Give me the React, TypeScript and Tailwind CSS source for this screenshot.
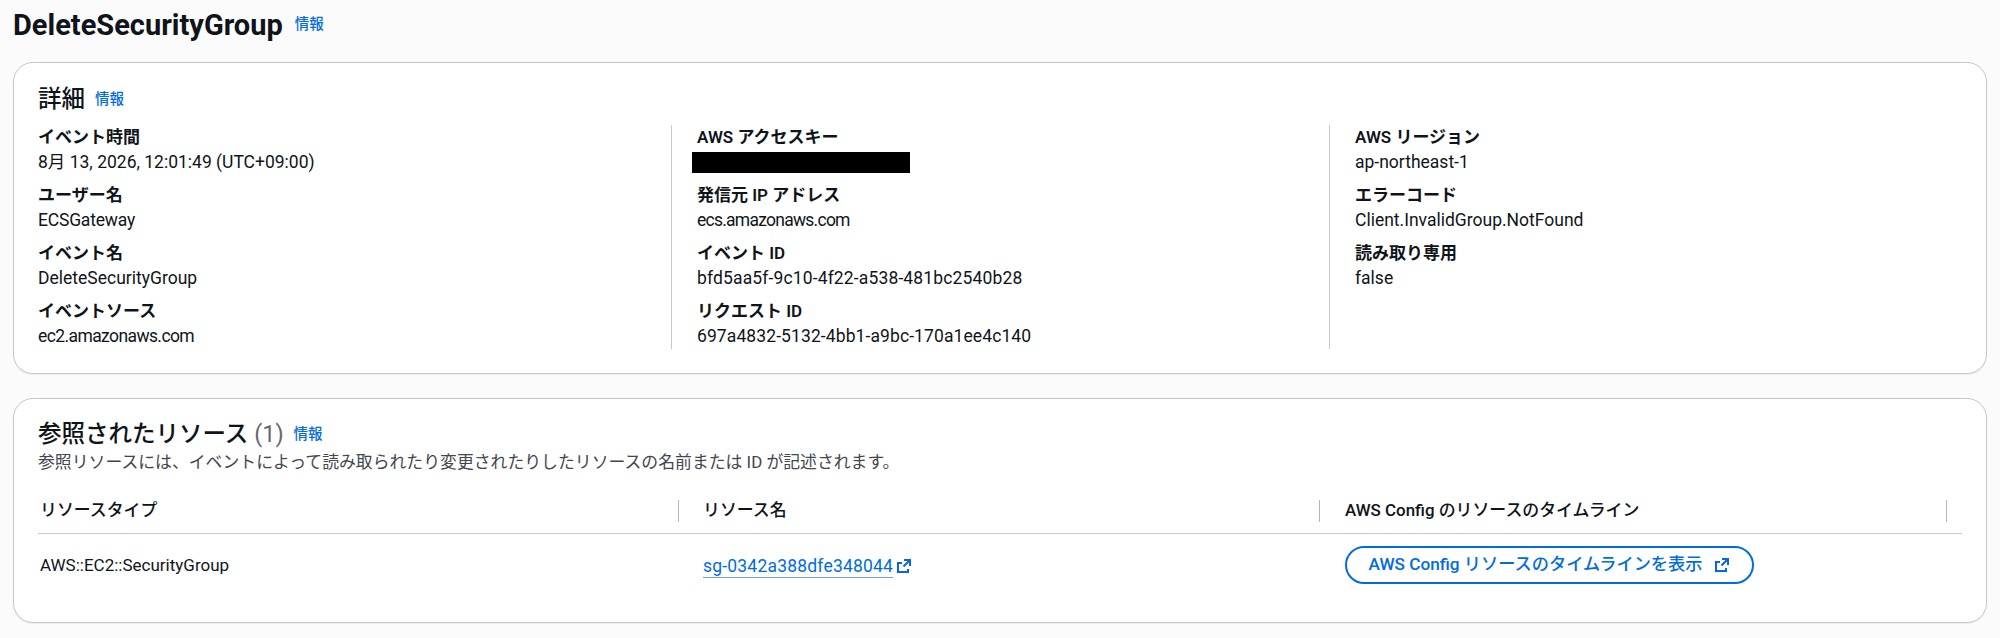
import React from 'react';

const detailColumns = [
  [
    { label: 'イベント時間', value: '8月 13, 2026, 12:01:49 (UTC+09:00)' },
    { label: 'ユーザー名', value: 'ECSGateway', tracking: 'tracking-[-0.2px]' },
    { label: 'イベント名', value: 'DeleteSecurityGroup' },
    { label: 'イベントソース', value: 'ec2.amazonaws.com', tracking: 'tracking-[-0.6px]' },
  ],
  [
    { label: 'AWS アクセスキー', value: '', redacted: true },
    { label: '発信元 IP アドレス', value: 'ecs.amazonaws.com', tracking: 'tracking-[-0.75px]' },
    { label: 'イベント ID', value: 'bfd5aa5f-9c10-4f22-a538-481bc2540b28', tracking: 'tracking-[0.14px]' },
    { label: 'リクエスト ID', value: '697a4832-5132-4bb1-a9bc-170a1ee4c140', tracking: 'tracking-[0.1px]' },
  ],
  [
    { label: 'AWS リージョン', value: 'ap-northeast-1' },
    { label: 'エラーコード', value: 'Client.InvalidGroup.NotFound' },
    { label: '読み取り専用', value: 'false' },
  ],
];

const ExternalIcon = () => (
  <svg viewBox="0 0 16 16" fill="none" stroke="#0a64dc" strokeWidth="2" className="w-[16px] h-[16px] shrink-0">
    <path d="M8 2h6v6M14 2 7.5 8.5" />
    <path d="M6 5H2v9h10v-3" />
  </svg>
);

const Info = () => <a className="text-[14.5px] text-[#006ce0] font-medium leading-none">情報</a>;

const Field = ({ label, value, redacted, tracking }: { label: string; value: string; redacted?: boolean; tracking?: string }) => (
  <div className="mb-2 last:mb-0">
    <div className="text-[17px] leading-[25px] font-semibold text-[#0f141a]">{label}</div>
    {redacted ? (
      <div className="h-[25px] flex items-center -ml-[5px]">
        <div className="w-[218px] h-[21px] bg-black" />
      </div>
    ) : (
      <div className={`text-[17.5px] leading-[25px] text-[#0f141a] ${tracking ?? ''}`}>{value}</div>
    )}
  </div>
);

export default function App() {
  return (
    <div className="min-h-screen bg-[#fbfbfc] px-[13px] font-['Roboto','Noto_Sans_CJK_JP',sans-serif]">
      <div className="h-[62px] pb-3 flex items-center gap-3">
        <h1 className="text-[29px] font-bold text-[#0f141a] leading-none">DeleteSecurityGroup</h1>
        <Info />
      </div>

      <section className="h-[312px] bg-white border border-[#c6c6cd] rounded-[20px] pt-[21px] px-6 shadow-[0_1px_1px_rgba(0,0,0,0.06)] mb-6">
        <div className="h-8 mb-[9px] flex items-center gap-2.5">
          <h2 className="text-[23.5px] font-medium text-[#0f141a] leading-none">詳細</h2>
          <Info />
        </div>
        <div className="grid grid-cols-[633px_658px_1fr]">
          {detailColumns.map((col, i) => (
            <div key={i} className={i > 0 ? 'pl-[25px] border-l border-[#c6c6cd]' : ''}>
              {col.map((f) => (
                <Field key={f.label} {...f} />
              ))}
            </div>
          ))}
        </div>
      </section>

      <section className="h-[225px] bg-white border border-[#c6c6cd] rounded-[20px] pt-[21px] px-6 shadow-[0_1px_1px_rgba(0,0,0,0.06)]">
        <div className="h-[30px] flex items-center gap-2.5">
          <h2 className="text-[23.5px] font-medium text-[#0f141a] leading-none">
            参照されたリソース <span className="font-normal text-[#656871]">(1)</span>
          </h2>
          <Info />
        </div>
        <p className="text-[16.85px] leading-6 text-[#424650]">
          参照リソースには、イベントによって読み取られたり変更されたりしたリソースの名前または ID が記述されます。
        </p>
        <div className="mt-[26px] grid grid-cols-[641px_641px_627px_1fr] border-b border-[#c6c6cd] h-[34px] text-[16.9px] font-medium text-[#0f141a]">
          <div className="pl-0.5 h-[22px] flex items-center justify-between">
            <span>リソースタイプ</span>
            <span className="w-px h-[22px] bg-[#b4b4bb]" />
          </div>
          <div className="pl-6 h-[22px] flex items-center justify-between">
            <span>リソース名</span>
            <span className="w-px h-[22px] bg-[#b4b4bb]" />
          </div>
          <div className="pl-[25px] h-[22px] flex items-center justify-between">
            <span>AWS Config のリソースのタイムライン</span>
            <span className="w-px h-[22px] bg-[#b4b4bb]" />
          </div>
        </div>
        <div className="grid grid-cols-[641px_641px_627px_1fr] pt-3 items-center text-[17px] text-[#0f141a]">
          <div className="pl-0.5 pt-0.5">AWS::EC2::SecurityGroup</div>
          <div className="pl-6 pt-0.5 flex items-center gap-[3px]">
            <a className="text-[17.5px] tracking-[0.2px] text-[#006ce0] border-b border-[#6d9fe6] leading-[22px]">sg-0342a388dfe348044</a>
            <ExternalIcon />
          </div>
          <div className="pl-[25px]">
            <a className="w-[409px] h-[38px] flex items-center justify-center gap-3 rounded-full border-2 border-[#006ce0] text-[#006ce0] text-[17.2px] font-medium">
              <span>AWS Config リソースのタイムラインを表示</span>
              <ExternalIcon />
            </a>
          </div>
        </div>
      </section>
    </div>
  );
}
